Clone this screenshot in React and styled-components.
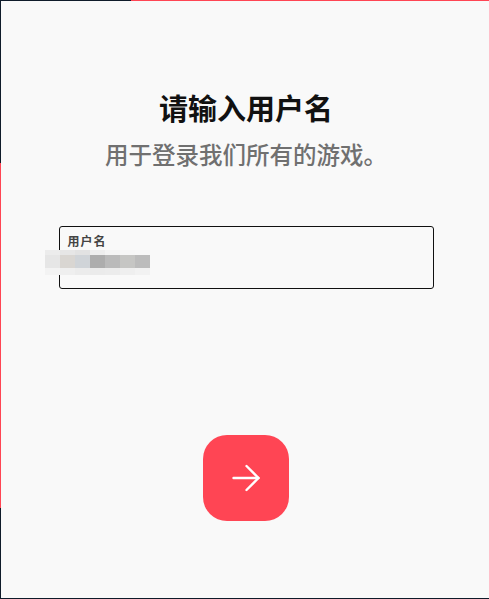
import React from 'react'
import styled, {createGlobalStyle} from "styled-components";

const GlobalStyle = createGlobalStyle`
  html, body {
    margin: 0;
    padding: 0;
    background: #f9f9f9;
  }

  * {
    box-sizing: border-box;
  }
`;

// privacy blur over the typed value, one colour per cell
const mosaic = [
  ['#ececec', '#e6e6e6', '#e2e2e2', '#eeeeee', '#f4f4f4', '#f7f7f7', '#f8f8f8'],
  ['#e6e6e6', '#d9d6d2', '#d0d4d8', '#adadad', '#bababa', '#c6c6c4', '#bcbcbc'],
  ['#f3f3f3', '#efefef', '#ececec', '#ebebeb', '#ececec', '#efefef', '#f2f2f2'],
];

const App = () => {
  return (
    <>
      <GlobalStyle/>
      <Frame>
        <Title>请输入用户名</Title>
        <Subtitle>用于登录我们所有的游戏。</Subtitle>

        <Field>
          <FieldLabel>用户名</FieldLabel>
          <Mosaic>
            {mosaic.flat().map((c, i) => (
              <span key={i} style={{background: c}}/>
            ))}
          </Mosaic>
        </Field>

        <NextButton aria-label="下一步">
          <svg width="30" height="30" viewBox="0 0 30 30" fill="none"
               stroke="#ffffff" strokeWidth="2.4" strokeLinecap="round" strokeLinejoin="round">
            <path d="M2.5 15h25"/>
            <path d="M15.5 3l12 12-12 12"/>
          </svg>
        </NextButton>
      </Frame>
    </>
  )
}

const Frame = styled.main`
  position: relative;
  height: 100vh;
  display: flex;
  flex-direction: column;
  align-items: center;
  padding: 88px 0 0 2px;
  border-left: 1px solid #0f1b2a;
  border-top: 1px solid #0f1b2a;
  border-bottom: 1px solid #0f1b2a;
  background: #f9f9f9;
  font-family: "Noto Sans CJK SC", "Noto Sans", sans-serif;

  &::before {
    content: "";
    position: absolute;
    top: -1px;
    left: 130px;
    right: 0;
    height: 1px;
    background: #ff4554;
  }

  &::after {
    content: "";
    position: absolute;
    left: -1px;
    top: 162px;
    height: 345px;
    width: 1px;
    background: #ff4554;
  }
`;

const Title = styled.h1`
  margin: 0;
  font-size: 29px;
  line-height: 36px;
  font-weight: 700;
  color: #111111;
`;

const Subtitle = styled.p`
  margin: 13px 0 0;
  font-size: 23.5px;
  line-height: 32px;
  font-weight: 500;
  color: #707070;
`;

const Field = styled.div`
  position: relative;
  margin-top: 56px;
  width: 375px;
  height: 63px;
  padding: 7px 8px 0;
  border: 1px solid #111111;
  border-radius: 3px;
`;

const FieldLabel = styled.label`
  display: block;
  font-size: 12px;
  line-height: 14px;
  font-weight: 700;
  letter-spacing: 1px;
  color: #444444;
`;

const Mosaic = styled.div`
  position: absolute;
  left: -15px;
  top: 23px;
  display: grid;
  grid-template-columns: repeat(7, 15px);
  grid-template-rows: 5px 13px 7px;
`;

const NextButton = styled.button`
  margin-top: 146px;
  width: 86px;
  height: 86px;
  display: flex;
  align-items: center;
  justify-content: center;
  border: none;
  border-radius: 24px;
  background: #ff4554;
  cursor: pointer;
  padding: 0;
`;

export default App
